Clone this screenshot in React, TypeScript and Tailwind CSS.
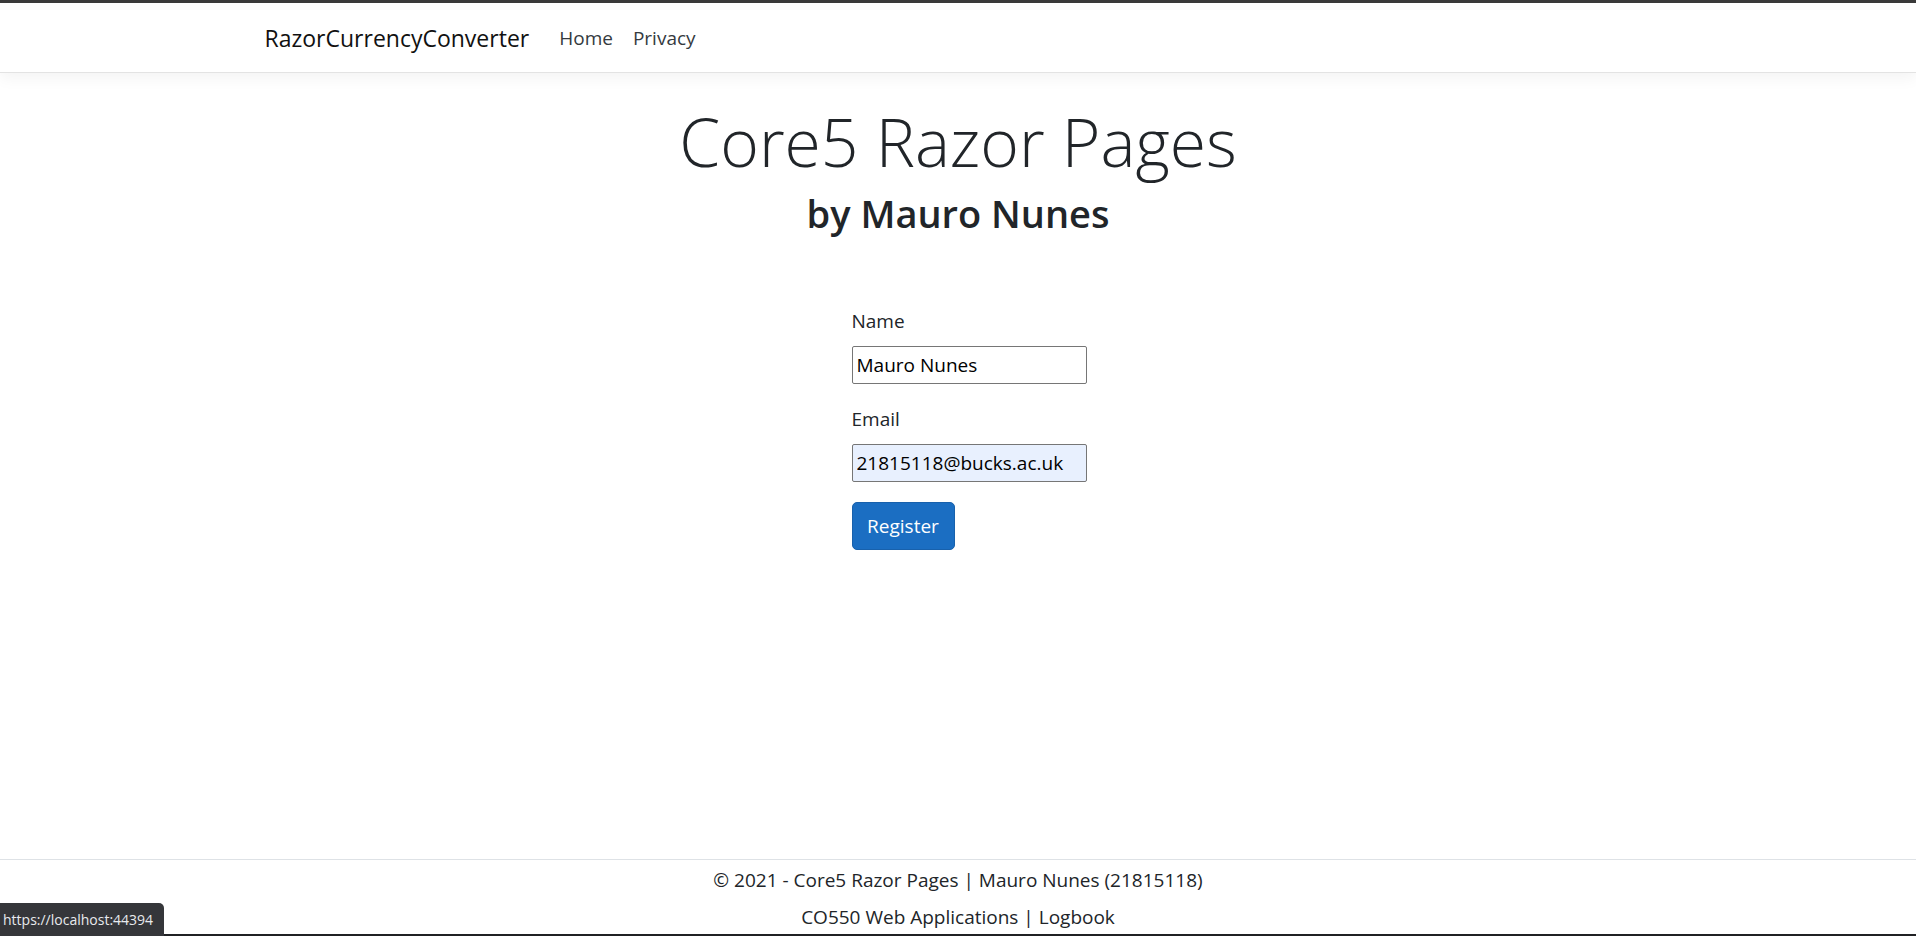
const fontStack = "font-['Segoe_UI','Open_Sans','Liberation_Sans',sans-serif]";

function NavBar() {
  return (
    <header className="relative z-10 h-[70px] border-b border-[#e3e3e3] bg-white shadow-[0_5px_15px_rgba(0,0,0,0.05)]">
      <nav className="mx-auto flex h-full w-[1425px] items-center px-[19px]">
        <a className="mr-[20px] text-[23px] leading-[30px] text-[#111]">
          RazorCurrencyConverter
        </a>
        <ul className="flex items-center">
          <li>
            <a className="px-[10px] text-[19px] leading-[30px] text-[#343a40]">Home</a>
          </li>
          <li>
            <a className="px-[10px] text-[19px] leading-[30px] text-[#343a40]">Privacy</a>
          </li>
        </ul>
      </nav>
    </header>
  );
}

function Field({
  label,
  value,
  autofilled,
}: {
  label: string;
  value: string;
  autofilled?: boolean;
}) {
  return (
    <div className="mb-[20px] flex flex-col">
      <label className="mb-[10px] text-[19px] leading-[30px] text-[#212529]">{label}</label>
      <input
        readOnly
        value={value}
        className={
          "h-[38px] w-[235px] rounded-[2px] border border-[#767676] px-[4px] text-[19px] text-black outline-none " +
          (autofilled ? "bg-[#e8f0fe]" : "bg-white")
        }
      />
    </div>
  );
}

function RegisterForm() {
  return (
    <div className="mx-auto mt-[69px] w-[1425px] pl-[606px]">
      <form className="flex flex-col items-start">
        <Field label="Name" value="Mauro Nunes" />
        <Field label="Email" value="21815118@bucks.ac.uk" autofilled />
        <button
          type="button"
          className="flex h-[48px] w-[103px] items-center justify-center rounded-[5px] border border-[#1861ac] bg-[#1b6ec2] text-[19px] text-white"
        >
          Register
        </button>
      </form>
    </div>
  );
}

function Footer() {
  return (
    <footer className="border-t border-[#dee2e6] text-center text-[19px] text-[#212529]">
      <div className="flex h-[40px] items-center justify-center">
        © 2021 - Core5 Razor Pages | Mauro Nunes (21815118)
      </div>
      <div className="flex h-[34px] items-center justify-center">
        CO550 Web Applications | Logbook
      </div>
    </footer>
  );
}

export default function App() {
  return (
    <div className={`relative flex h-[936px] flex-col overflow-hidden bg-white ${fontStack}`}>
      <div className="h-[3px] bg-[#3b3b3b]" />
      <NavBar />

      <main className="flex-1">
        <div className="mt-[26px] text-center">
          <h1 className="mb-[6px] text-[66px] leading-[84px] font-light text-[#212529]">
            Core5 Razor Pages
          </h1>
          <h2 className="text-[38px] leading-[48px] font-semibold text-[#212529]">by Mauro Nunes</h2>
        </div>
        <RegisterForm />
      </main>

      <Footer />
      <div className="h-[2px] bg-[#202124]" />

      <div className="absolute bottom-0 left-0 flex h-[33px] w-[164px] items-center rounded-tr-[5px] bg-[#35363a] pl-[3px] text-[14px] text-[#e8eaed]">
        https://localhost:44394
      </div>
    </div>
  );
}
